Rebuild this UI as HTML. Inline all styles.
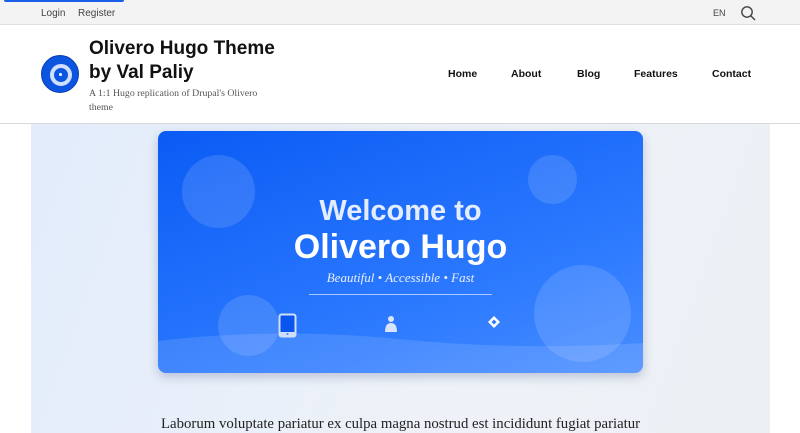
<!DOCTYPE html>
<html><head><meta charset="utf-8"><style>
*{margin:0;padding:0;box-sizing:border-box}
body{width:800px;height:433px;overflow:hidden;background:#fff;font-family:"Liberation Sans",sans-serif;position:relative}
.top{position:absolute;left:0;top:0;width:800px;height:25px;background:#f3f3f3;border-bottom:1px solid #e0e0e0}
.bar{position:absolute;left:4px;top:0;width:120px;height:2px;background:#1a5ee8;border-radius:0 0 2px 2px}
.top span{position:absolute;top:8px;font-size:10px;color:#444}
.hdr{position:absolute;left:0;top:25px;width:800px;height:99px;background:#fff;border-bottom:1px solid #d8d8d8}
.logo{position:absolute;left:41px;top:55px;width:38px;height:38px;border-radius:50%;background:#0b55e0;border:1px solid #0a3fb0}
.logo:before{content:"";position:absolute;left:8px;top:8px;width:14px;height:14px;border:4px solid #cfe0ff;border-radius:50%}
.logo:after{content:"";position:absolute;left:17px;top:17px;width:3px;height:3px;background:#fff;border-radius:50%}
.title{position:absolute;left:89px;top:37px;font-size:19px;font-weight:bold;line-height:24px;color:#111}
.sub{position:absolute;left:89px;top:87px;font-family:"Liberation Serif",serif;font-size:9.8px;line-height:13.5px;color:#555;width:185px}
.nav{position:absolute;top:68px;font-size:10.5px;font-weight:bold;color:#111}
.main{position:absolute;left:31px;top:124px;width:739px;height:309px;background:linear-gradient(110deg,#e2ecfb,#eef2f8 60%,#eceff4)}
.card{position:absolute;left:158px;top:131px;width:485px;height:242px;border-radius:8px;overflow:hidden;background:linear-gradient(160deg,#0a5bf5,#2f7cff 70%,#4a8eff);box-shadow:0 4px 10px rgba(40,60,120,.25)}
.c{position:absolute;border-radius:50%;background:rgba(255,255,255,.13)}
.h1{position:absolute;left:0;width:485px;text-align:center;color:#fff;font-weight:bold}
.ln{position:absolute;left:151px;top:163px;width:183px;height:1px;background:rgba(255,255,255,.6)}
.txt{position:absolute;left:161px;top:416px;font-family:"Liberation Serif",serif;font-size:14.8px;color:#222}
</style></head><body>
<div class="top"><div class="bar"></div><span style="left:41px">Login</span><span style="left:78px">Register</span><span style="left:713px;font-size:9px">EN</span>
<svg style="position:absolute;left:740px;top:5px" width="17" height="17" viewBox="0 0 17 17"><circle cx="7" cy="7" r="5.2" fill="none" stroke="#444" stroke-width="1.4"/><line x1="11" y1="11" x2="15" y2="15" stroke="#444" stroke-width="1.5"/></svg></div>
<div class="hdr"></div>
<div class="logo"></div>
<div class="title">Olivero Hugo Theme<br>by Val Paliy</div>
<div class="sub">A 1:1 Hugo replication of Drupal's Olivero theme</div>
<div class="nav" style="left:448px">Home</div><div class="nav" style="left:511px">About</div><div class="nav" style="left:577px">Blog</div><div class="nav" style="left:634px">Features</div><div class="nav" style="left:712px">Contact</div>
<div class="main"></div>
<div class="card">
<div class="c" style="left:24px;top:24px;width:73px;height:73px"></div>
<div class="c" style="left:370px;top:24px;width:49px;height:49px"></div>
<div class="c" style="left:376px;top:134px;width:97px;height:97px"></div>
<div class="c" style="left:60px;top:164px;width:61px;height:61px"></div>
<svg style="position:absolute;left:0;top:190px" width="485" height="52"><path d="M0 20 Q120 6 240 18 T485 22 V52 H0Z" fill="rgba(255,255,255,.12)"/></svg>
<div class="h1" style="top:64px;font-size:29px;color:#e4ecff">Welcome to</div>
<div class="h1" style="top:97px;font-size:34px">Olivero Hugo</div>
<div class="h1" style="top:139px;font-family:'Liberation Serif',serif;font-weight:normal;font-style:italic;font-size:13px;color:#e8efff">Beautiful • Accessible • Fast</div>
<div class="ln"></div>
<svg style="position:absolute;left:120px;top:182px" width="20" height="26"><rect x="1.5" y="1.5" width="16" height="22" rx="2" fill="#0a55f0" stroke="#d0defa" stroke-width="2"/><rect x="2" y="19" width="15" height="4" fill="#d0defa"/><circle cx="9.5" cy="21" r="1" fill="#3b80ff"/></svg>
<svg style="position:absolute;left:225px;top:184px" width="16" height="18"><circle cx="8" cy="4" r="3" fill="#d8e4fb"/><path d="M2 17 Q2 8 8 8 Q14 8 14 17Z" fill="#d8e4fb"/></svg>
<svg style="position:absolute;left:329px;top:184px" width="14" height="14"><path d="M7 1 L13 7 L7 13 L1 7Z" fill="#fff"/><path d="M7 4.5 L9.5 7 L7 9.5 L4.5 7Z" fill="#2f78ff"/></svg>
</div>
<div class="txt">Laborum voluptate pariatur ex culpa magna nostrud est incididunt fugiat pariatur</div>
</body></html>
